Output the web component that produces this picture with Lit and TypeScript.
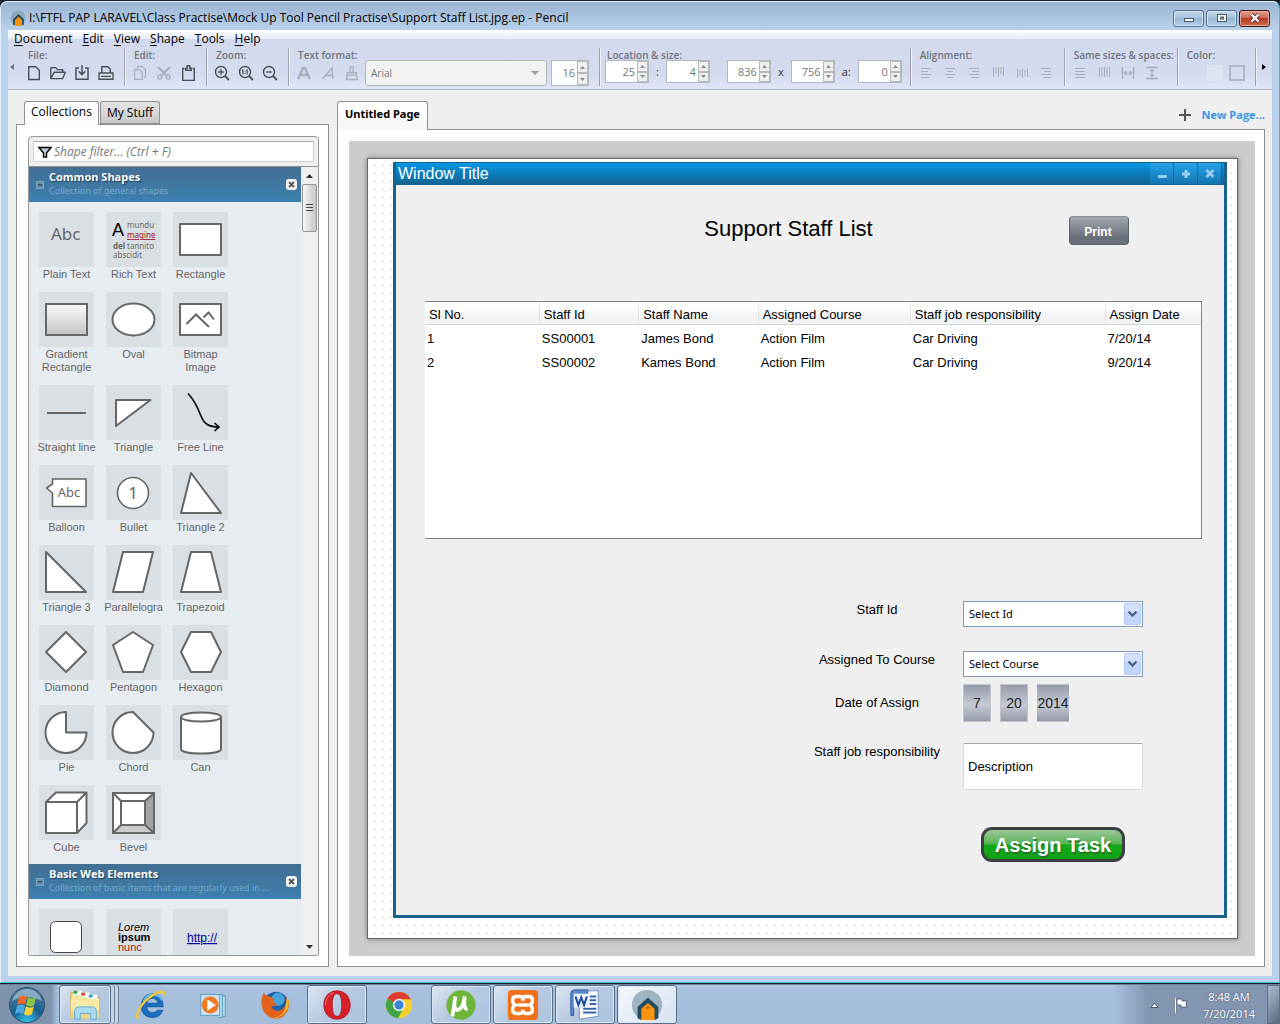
import { LitElement, html, svg, css, nothing } from "lit";
import type { TemplateResult } from "lit";
import { customElement, state } from "lit/decorators.js";
import { classMap } from "lit/directives/class-map.js";

type Art = ReturnType<typeof svg>;

const uiFont = css`"Open Sans", "Noto Sans", sans-serif`;
const noto = css`"Noto Sans", "Open Sans", sans-serif`;
const arial = css`"Liberation Sans", Arial, sans-serif`;

/* ---------- toolbar icons, 16 x 16 ---------- */

const icon = (art: Art) => html`<svg class="icon" viewBox="0 0 16 16" width="16" height="16" aria-hidden="true">${art}</svg>`;

const alignLines = (widths: number[], anchor: "start" | "middle" | "end") =>
  svg`${widths.map((w, i) => {
    const x = anchor === "start" ? 3 : anchor === "middle" ? 8 - w / 2 : 13 - w;
    return svg`<rect x=${x} y=${3 + i * 3} width=${w} height="1"/>`;
  })}`;

const lens = svg`<circle cx="7" cy="7" r="5.5" fill="none" stroke="currentColor" stroke-width="1.4"/><path d="M11 11l4 4" stroke="currentColor" stroke-width="1.8"/>`;

const fileIcons = [
  { name: "New document", art: svg`<path d="M2.7 1.7h7l3.6 3.6v9.2H2.7z" fill="none" stroke="currentColor" stroke-width="1.4"/>` },
  { name: "Open", art: svg`<path d="M.8 13.5V2.6h5l1.5 2h5.5v2.6M.9 13.6l3.2-6.3h11.2l-2.6 6.3z" fill="none" stroke="currentColor" stroke-width="1.4" stroke-linejoin="round"/>` },
  { name: "Save", art: svg`<path d="M5 3H2v11.3h12V3h-3M8 0v9M4.8 6.4L8 9.6l3.2-3.2" fill="none" stroke="currentColor" stroke-width="1.5"/>` },
  { name: "Print", art: svg`<path d="M3.8 8V1.7h6l2.5 2.5V8M1 14.3V8h14v6.3zM3 11.4h10" fill="none" stroke="currentColor" stroke-width="1.4"/>` },
];

const editIcons = [
  { name: "Copy", off: true, art: svg`<path d="M5.7 3.6V1.6h4.8l3 3v7.6h-2M2.7 4.6h4.5l3 3v6.8H2.7z" fill="none" stroke="currentColor" stroke-width="1.2"/>` },
  { name: "Cut", off: true, art: svg`<path d="M2 2l9.3 9M14 2L4.7 11" stroke="currentColor" stroke-width="2.2"/><circle cx="3.8" cy="12" r="2.1" fill="none" stroke="currentColor" stroke-width="1.4"/><circle cx="12.2" cy="12" r="2.1" fill="none" stroke="currentColor" stroke-width="1.4"/>` },
  { name: "Paste", art: svg`<path d="M4.5 3.5H2.7v12h11.6v-12h-1.800" fill="none" stroke="currentColor" stroke-width="1.4"/><path d="M5.7 5.3V3.2h1.5V.8h2.6v2.4h1.5v2.1z" fill="none" stroke="currentColor" stroke-width="1.4"/>` },
];

const zoomIcons = [
  { name: "Zoom in", art: svg`${lens}<path d="M4.2 7h5.6M7 4.2v5.6" stroke="currentColor" stroke-width="1.4"/>` },
  { name: "Actual size", art: svg`${lens}<path d="M4.9 4.6v5M9.2 4.6v5M3.9 5.4h1M8.2 5.4h1" stroke="currentColor" stroke-width="1.2"/><path d="M6.6 5.8h1v1h-1zM6.6 8h1v1h-1z" fill="currentColor"/>` },
  { name: "Zoom out", art: svg`${lens}<path d="M4.2 7h5.6" stroke="currentColor" stroke-width="1.4"/>` },
];

const textIcons = [
  { name: "Bold", off: true, art: svg`<path d="M2.2 14L7 3h2l4.8 11M4.2 10h7.6" fill="none" stroke="currentColor" stroke-width="2.4"/>` },
  { name: "Italic", off: true, art: svg`<path d="M2.5 14L12 3l1 11M6 10.5h6.7" fill="none" stroke="currentColor" stroke-width="1.5"/>` },
  { name: "Copy style", off: true, art: svg`<path d="M6.2 7.5V1.8h3v5.7M3.2 10V7.6h9.2V10M3.2 10.2h9.2l1 4.3H2.2z" fill="none" stroke="currentColor" stroke-width="1.3"/>` },
];

const bars = (heights: number[]) => svg`${heights.map((h, i) => svg`<rect x=${3 + i * 2.5} y="2" width="1" height=${h}/>`)}`;

const alignIcons = [
  { name: "Align left", off: true, art: alignLines([10, 7, 10, 8], "start") },
  { name: "Align center", off: true, art: alignLines([10, 6, 10, 6], "middle") },
  { name: "Align right", off: true, art: alignLines([10, 7, 10, 8], "end") },
  { name: "Align top", off: true, art: bars([10, 7, 10, 7, 9]) },
  { name: "Align middle", off: true, art: svg`${[9, 6, 9, 6, 8].map((h, i) => svg`<rect x=${3 + i * 2.5} y=${8 - h / 2} width="1" height=${h}/>`)}` },
  { name: "Align bottom", off: true, art: alignLines([10, 7, 10, 8], "end") },
];

const sizeIcons = [
  { name: "Same width", off: true, art: alignLines([10, 10, 10, 10], "start") },
  { name: "Same height", off: true, art: bars([10, 10, 10, 10, 10]) },
  { name: "Equal horizontal space", off: true, art: svg`<path d="M2.5 2v12M13.5 2v12" stroke="currentColor" stroke-width="1.4"/><path d="M4.5 8h7M6.5 6l-2 2 2 2M9.5 6l2 2-2 2" fill="none" stroke="currentColor" stroke-width="1.2"/>` },
  { name: "Equal vertical space", off: true, art: svg`<path d="M2 2.5h12M2 13.5h12" stroke="currentColor" stroke-width="1.4"/><path d="M8 4.5v7M6 6.5l2-2 2 2M6 9.5l2 2 2-2" fill="none" stroke="currentColor" stroke-width="1.2"/>` },
];

/* ---------- shape thumbnails, 55 x 55 ---------- */

const poly = (points: string) => svg`<polygon class="ink" points=${points}/>`;

const commonShapes: { label: string; art: Art }[] = [
  { label: "Plain Text", art: svg`<text x="12" y="28" font-size="17" fill="#666">Abc</text>` },
  {
    label: "Rich Text",
    art: svg`<g font-size="8" fill="#6b6b64"><text x="6" y="24" font-size="18" font-family="Liberation Sans, sans-serif" fill="#000">A</text><text x="21" y="16">mundu</text><text x="21" y="26" fill="#a01020" text-decoration="underline">magine</text><text x="7" y="37" font-weight="700">del</text><text x="21" y="37">tannito</text><text x="7" y="46">abscidit</text></g>`,
  },
  { label: "Rectangle", art: svg`<rect class="ink" x="7" y="12" width="41" height="31"/>` },
  {
    label: "Gradient Rectangle",
    art: svg`<defs><linearGradient id="fade" x1="0" y1="0" x2="0" y2="1"><stop offset="0" stop-color="#fafafa"/><stop offset="1" stop-color="#c4c4c4"/></linearGradient></defs><rect x="7" y="12" width="41" height="31" fill="url(#fade)" stroke="#666" stroke-width="2"/>`,
  },
  { label: "Oval", art: svg`<ellipse class="ink" cx="27.5" cy="27.5" rx="21" ry="16"/>` },
  { label: "Bitmap Image", art: svg`<rect class="ink" x="7" y="12" width="41" height="31"/><path class="line" d="M13.5 32L23 22.5 36 35M30.5 25.5L35.5 20.5 41 27.5"/>` },
  { label: "Straight line", art: svg`<path class="line" d="M8 28h39"/>` },
  { label: "Triangle", art: poly("10,15 44.5,15 10,41") },
  { label: "Free Line", art: svg`<path d="M15 8.5C23 17 25 24 28 31 31 39 36 42 46 42M41.5 38L46 42 41.5 46" fill="none" stroke="#000" stroke-width="1.6"/>` },
  { label: "Balloon", art: svg`<path class="ink thin" d="M13.5 14H47V41.5H13.5V28L7.5 23l6-4z"/><text x="30" y="32" font-size="13" fill="#666" text-anchor="middle">Abc</text>` },
  { label: "Bullet", art: svg`<circle class="ink thin" cx="27" cy="28" r="15.5"/><text x="27" y="34" font-size="17" fill="#666" text-anchor="middle">1</text>` },
  { label: "Triangle 2", art: poly("18,8 48,48 8,48") },
  { label: "Triangle 3", art: poly("7,7 47,47 7,47") },
  { label: "Parallelogra", art: poly("17,7 47,7 37,47 7,47") },
  { label: "Trapezoid", art: poly("18,7 38,7 48,47 8,47") },
  { label: "Diamond", art: poly("27,7 47,27 27,47 7,27") },
  { label: "Pentagon", art: poly("27,7 47,20 37,47 17,47 7,20") },
  { label: "Hexagon", art: poly("18,7 38,7 48,27 38,47 18,47 8,27") },
  { label: "Pie", art: svg`<path class="ink" d="M27 27.5V7A20.5 20.5 0 1 0 47.5 27.5z"/>` },
  { label: "Chord", art: svg`<path class="ink" d="M27 7A20.5 20.5 0 1 0 47.5 27.5z"/>` },
  { label: "Can", art: svg`<path class="ink" d="M8 12V44C8 50 48 50 48 44V12"/><ellipse class="ink" cx="28" cy="12" rx="20" ry="4.5"/>` },
  { label: "Cube", art: svg`<path class="ink" d="M7 17L17 7.5H47.5V38L38 48H7zM7 17H38V48M38 17L47.5 7.5"/>` },
  {
    label: "Bevel",
    art: svg`<rect class="ink" x="7" y="8" width="41" height="40"/><path d="M48 8V48L39 40V16z" fill="#a3a3a3"/><path d="M7 48H48L39 40H15z" fill="#ccc"/><path class="line" d="M7 8H48V48H7zM15 16H39V40H15zM7 8l8 8M48 8l-9 8M48 48l-9-8M7 48l8-8"/>`,
  },
];

const webShapes: { name: string; art: Art }[] = [
  { name: "Panel", art: svg`<rect x="11.5" y="12.5" width="31" height="31" rx="5" fill="#fff" stroke="#444" stroke-width="1"/>` },
  { name: "Rich text", art: svg`<g font-size="11" font-family="Liberation Sans, sans-serif"><text x="12" y="22" font-style="italic">Lorem</text><text x="12" y="32" font-weight="700">ipsum</text><text x="12" y="42" fill="#b01818">nunc</text></g>` },
  { name: "Link", art: svg`<text x="14" y="33" font-size="12" font-family="Liberation Sans, sans-serif" fill="#0000a0" text-decoration="underline">http://</text>` },
];

@customElement("shape-section")
class ShapeSection extends LitElement {
  static properties = { heading: {}, note: {}, shapes: { attribute: false } };
  declare heading: string;
  declare note: string;
  declare shapes: { label?: string; name?: string; art: Art }[];

  static styles = css`
    :host { display: block; }
    button { font: inherit; border: 0; padding: 0; background: none; color: inherit; }
    .bar {
      display: flex; align-items: center; gap: 5px; height: 35px; padding: 0 4px 0 7px;
      background: linear-gradient(#436f94, #3d80af);
    }
    .fold, .close { flex: none; display: flex; }
    .titles { flex: 1; min-width: 0; padding-bottom: 3px; }
    h2 {
      margin: 0; font: 700 11px/15px ${uiFont}; color: #fff;
      text-shadow: 1px 1px 1px #1d3e57;
    }
    .note {
      margin: 0; font: 9px/13px ${noto}; color: #75a8cb;
      white-space: nowrap; overflow: hidden; text-overflow: ellipsis;
    }
    .grid {
      display: grid; grid-template-columns: repeat(auto-fill, 55px); gap: 11px 12px;
      padding: 10px 63px 10px 10px;
    }
    .shape { display: flex; flex-direction: column; align-items: center; gap: 1px; width: 55px; }
    .thumb { display: block; background: #dadfe4; font-family: ${noto}; }
    .label { margin: 0 -4px; font: 11px/13px ${arial}; color: #666; text-align: center; }
    .ink { fill: #fff; stroke: #666; stroke-width: 2; stroke-linejoin: round; }
    .thin { stroke-width: 1.6; }
    .line { fill: none; stroke: #666; stroke-width: 2; }
  `;

  render() {
    return html`
      <div class="bar">
        <button class="fold" aria-label="Collapse ${this.heading}">
          <svg width="8" height="8"><rect width="8" height="8" fill="#7ba5c2"/><rect x="1" y="1" width="6" height="6" fill="#6590b0"/><rect x="2" y="3" width="4" height="1.5" fill="#284e6d"/></svg>
        </button>
        <div class="titles">
          <h2>${this.heading}</h2>
          <p class="note">${this.note}</p>
        </div>
        <button class="close" aria-label="Close ${this.heading}">
          <svg width="11" height="11"><rect width="11" height="11" rx="3" fill="#f4f4f4"/><path d="M3 3l5 5M8 3L3 8" stroke="#555" stroke-width="1.8"/></svg>
        </button>
      </div>
      <div class="grid">
        ${this.shapes.map(
          (s) => html`<button class="shape" aria-label=${s.label ?? s.name ?? ""}>
            <svg class="thumb" width="55" height="55" viewBox="0 0 55 55">${s.art}</svg>
            ${s.label ? html`<span class="label">${s.label}</span>` : nothing}
          </button>`,
        )}
      </div>
    `;
  }
}

@customElement("mock-window")
class MockWindow extends LitElement {
  static styles = css`
    :host {
      flex: 1; display: flex; flex-direction: column; min-width: 0; background: #efefef;
      border: 3px solid #17618b; border-top-width: 1px; font: 13px/17px ${arial}; color: #000;
    }
    button, input, select, textarea { font: inherit; color: inherit; margin: 0; box-sizing: border-box; }
    .titlebar {
      display: flex; align-items: flex-start; height: 22px; padding-right: 2px; color: #fff;
      background: linear-gradient(#0597e6, #14618e);
    }
    .name { flex: 1; margin: 0; padding-left: 2px; font: 16px/22px ${arial}; }
    .ctl {
      width: 24px; height: 21px; padding: 0; display: grid; place-items: center; border: 0;
      border-right: 1px solid #15608c; background: linear-gradient(#27a2ea, #1275b0);
    }
    .body { padding: 31px 22px 0 29px; }
    .head { display: flex; align-items: flex-start; padding: 0 73px 0 83px; height: 29px; }
    h1 { flex: 1; margin: 0; font: 22px/25px ${arial}; text-align: center; }
    .print {
      width: 60px; height: 29px; padding: 2px 2px 0 0; border: 1px solid #5d636c; border-top-color: #8b9098; border-radius: 4px;
      background: linear-gradient(#a3a8af, #686f79 75%); color: #fff; font: 700 12px/16px ${arial};
    }
    .list {
      margin-top: 56px; height: 236px; background: #fff;
      border: 1px solid #808488; border-left: 0;
    }
    table { width: 100%; table-layout: fixed; border-collapse: separate; border-spacing: 0; }
    th, td { box-sizing: border-box; height: 24px; padding: 2px 0 0 2px; text-align: left; font-weight: 400; white-space: nowrap; }
    th {
      height: 23px; padding-left: 4px; border-bottom: 1px solid #d5d5d5; border-right: 1px solid #e2e3e6;
      background: linear-gradient(#fff 40%, #f5f6f8 42%, #f1f2f4);
    }
    th:last-child { border-right: 0; }
    .c1 { width: 14.8%; } .c2 { width: 12.8%; } .c3 { width: 15.4%; }
    .c4 { width: 19.6%; } .c5 { width: 25.1%; }
    form {
      display: grid; grid-template-columns: 130px 180px; grid-template-rows: 50px 33px 59px 84px;
      column-gap: 21px; justify-content: end; align-items: start; margin: 62px 59px 0 0;
    }
    label { text-align: center; }
    .tall { line-height: 38px; }
    .pick { display: grid; align-items: center; height: 26px; background: #fff; border: 1px solid #7f9db9; box-sizing: border-box; }
    .pick > * { grid-area: 1 / 1; }
    select {
      appearance: none; width: 100%; height: 24px; border: 0; padding: 0 0 0 5px; background: transparent;
      font: 11px/16px ${noto};
    }
    .drop { justify-self: end; margin-right: 1px; pointer-events: none; }
    .date { display: flex; gap: 9px; }
    .date input {
      width: 28px; height: 38px; padding: 0; border: 1px solid #c3c5cc; text-align: center; font-size: 14px; color: #222;
      background: linear-gradient(#989ca9, #c5c9d4 55%, #989ca9);
    }
    .date .year { width: 32px; border-width: 1px 0; }
    textarea {
      width: 180px; height: 47px; padding: 14px 4px 0; resize: none; overflow: hidden; display: block;
      background: #fff; border: 1px solid #d8d8dc; border-top-color: #a5a6aa; border-radius: 2px;
    }
    .assign {
      grid-column: 2; justify-self: center; width: 144px; height: 35px; padding: 0; white-space: nowrap;
      border: 3px solid #3c4043; border-radius: 11px; color: #fff; font: 700 20px/28px ${arial};
      text-shadow: 1px 2px 1px #26702a;
      background: linear-gradient(#9cc79a, #57b355 48%, #12a81a 52%, #0fa416);
    }
  `;

  private rows = [
    ["1", "SS00001", "James Bond", "Action Film", "Car Driving", "7/20/14"],
    ["2", "SS00002", "Kames Bond", "Action Film", "Car Driving", "9/20/14"],
  ];
  private columns = ["Sl No.", "Staff Id", "Staff Name", "Assigned Course", "Staff job responsibility", "Assign Date"];

  private dropArrow() {
    return html`<svg class="drop" width="17" height="22" aria-hidden="true">
      <rect x="0.5" y="0.5" width="16" height="21" rx="1" fill="#c3d5fb" stroke="#b4c8f3"/>
      <rect x="1" y="1" width="15" height="8" fill="#d5e1fc"/>
      <path d="M4.5 8.5l4 4 4-4" fill="none" stroke="#4d6185" stroke-width="2.4"/>
    </svg>`;
  }

  render() {
    return html`
      <div class="titlebar">
        <p class="name">Window Title</p>
        <button class="ctl" aria-label="Minimize"><svg width="12" height="12"><rect x="2" y="7" width="9" height="3" rx="1" fill="#9ad1f3"/></svg></button>
        <button class="ctl" aria-label="Maximize"><svg width="12" height="12"><path d="M6 2v8M2 6h8" stroke="#9ad1f3" stroke-width="3"/></svg></button>
        <button class="ctl" aria-label="Close"><svg width="12" height="12"><path d="M2.5 2l7 7M9.5 2l-7 7" stroke="#9ad1f3" stroke-width="2.6"/></svg></button>
      </div>
      <div class="body">
        <div class="head">
          <h1>Support Staff List</h1>
          <button class="print">Print</button>
        </div>
        <div class="list">
          <table>
            <thead><tr>${this.columns.map((c, i) => html`<th class="c${i + 1}" scope="col">${c}</th>`)}</tr></thead>
            <tbody>${this.rows.map((r) => html`<tr>${r.map((v) => html`<td>${v}</td>`)}</tr>`)}</tbody>
          </table>
        </div>
        <form @submit=${(e: Event) => e.preventDefault()}>
          <label for="staff">Staff Id</label>
          <div class="pick"><select id="staff"><option>Select Id</option></select>${this.dropArrow()}</div>
          <label for="course">Assigned To Course</label>
          <div class="pick"><select id="course"><option>Select Course</option></select>${this.dropArrow()}</div>
          <label class="tall" for="month">Date of Assign</label>
          <div class="date">
            <input id="month" aria-label="Month" .value=${"7"}>
            <input aria-label="Day" .value=${"20"}>
            <input class="year" aria-label="Year" .value=${"2014"}>
          </div>
          <label for="duty">Staff job responsibility</label>
          <textarea id="duty" .value=${"Description"}></textarea>
          <button class="assign">Assign Task</button>
        </form>
      </div>
    `;
  }
}

/* ---------- taskbar pictures, 36 x 36 ---------- */

const apps: { name: string; open?: boolean; active?: boolean; stack?: boolean; art: Art }[] = [
  {
    name: "Explorer", open: true, stack: true,
    art: svg`<path d="M3 5h10l2 3h10l2 2h6v22H3z" fill="#f3e39a" stroke="#c9ac52"/><rect x="6" y="3" width="9" height="5" fill="#fff" stroke="#ccc" stroke-width=".5"/><rect x="6" y="3" width="4" height="3" fill="#2cab3a"/><rect x="14" y="5" width="9" height="5" fill="#fff"/><rect x="14" y="5" width="4" height="3" fill="#d43"/><rect x="22" y="7" width="9" height="5" fill="#fff"/><rect x="22" y="7" width="4" height="3" fill="#39c"/><path d="M3 12h30v20H3z" fill="#f7eaa6"/><path d="M3 24h30v8H3z" fill="#eed98a"/><path d="M7 33V25q0-5 5-5h13q5 0 5 5v8h-6v-6H13v6z" fill="#a9dcf2" stroke="#5fa9cf"/>`,
  },
  {
    name: "Internet Explorer",
    art: svg`<path d="M31 20H13.5q1 6 6 6 3.5 0 5-2.5H30.5Q28 31.5 19.5 31.5 7.5 30.5 7.5 18.5 8.5 6.5 19.5 6 31 6.5 31 20zM13.5 16H25q-.5-5-5.5-5t-6 5z" fill="#1c6fbe" stroke="#124f92" stroke-width=".6"/><path d="M10 14q3-7 10-7 7 .5 9.5 6" fill="none" stroke="#5cc0f2" stroke-width="1.8"/><path d="M5 31C0 34 5 19 15 11 24 4 34 1 32 8" fill="none" stroke="#f2c53a" stroke-width="2.5"/>`,
  },
  {
    name: "Media Player",
    art: svg`<path d="M26 8h5v22h-5" fill="#bddcec" stroke="#4c9cc4"/><path d="M23 7h5v24h-5" fill="#bddcec" stroke="#4c9cc4"/><rect x="5" y="7" width="20" height="22" fill="#cfe3ee" stroke="#5aa0c6"/><circle cx="15" cy="18" r="9" fill="#ef7a22"/><path d="M12 12l9 6-9 6z" fill="#fff"/>`,
  },
  {
    name: "Firefox",
    art: svg`<circle cx="19" cy="17" r="13" fill="#1f5fa8"/><circle cx="21" cy="12" r="7" fill="#45a3dd"/><path d="M6 5q-5 10 0 20 6 9 17 7 10-4 10-17-1-4-3-6 1 13-8 15-7 0-8-5 5 1 6-2-5-2-3-5-4-4-6-3-3-1-5-4z" fill="#e2621b"/><path d="M31 9q4 9-2 17-6 6-13 6 12-3 13-12z" fill="#f6b82c"/>`,
  },
  {
    name: "Opera", open: true,
    art: svg`<path fill-rule="evenodd" d="M18 3C9 3 4 10 4 18s5 15 14 15 14-7 14-15S27 3 18 3zM18 6c4 0 5 6 5 12s-1 12-5 12-5-6-5-12 1-12 5-12z" fill="#d9202a" stroke="#a5141c" stroke-width=".8"/><path d="M15 5C9 6 6 12 6 18" fill="none" stroke="#f07a7c"/>`,
  },
  {
    name: "Chrome",
    art: svg`<circle cx="18" cy="18" r="14" fill="#f9cf2e"/><path d="M18 18L6 11A14 14 0 0 0 17 32l6-11z" fill="#3fa548"/><path d="M5.9 11A14 14 0 0 1 30.5 12H18v6z" fill="#dc3c31"/><circle cx="18" cy="18" r="6.5" fill="#fff"/><circle cx="18" cy="18" r="5" fill="#4084d8"/>`,
  },
  {
    name: "uTorrent", open: true,
    art: svg`<circle cx="18" cy="18" r="15.5" fill="#6fb53c"/><path d="M12 9l-3 21M12 9q-3 15 3 14 5-1 7-14-2 14 3 13" fill="none" stroke="#fff" stroke-width="4"/>`,
  },
  {
    name: "XAMPP", open: true,
    art: svg`<rect x="2" y="2" width="32" height="32" rx="4" fill="#f0721c"/><path d="M11 9h4q3 0 3 4.5 0-4.5 3-4.5h3q4 0 4 4t-3 5q3 1 3 5t-4 4h-3q-3 0-3-4 0 4-3 4h-4q-4 0-4-4t3-5q-3-1-3-5t4-4zM13 18h10" fill="none" stroke="#fff" stroke-width="3.5"/>`,
  },
  {
    name: "Word", open: true,
    art: svg`<path d="M12 3h20v27l-20 3z" fill="#fff" stroke="#6d8fc5"/><path d="M22 9h8M22 13h8M22 17h8M16 22h14M16 26h14" stroke="#3565b0" stroke-width="2"/><path d="M3 6q0-4 5-4h13v18H6v9H3z" fill="#5b87cb" stroke="#31589b"/><rect x="6" y="6" width="17" height="15" fill="#eaf1fc"/><path d="M8 9l3 9 3-8 3 8 3-9" fill="none" stroke="#1f4a96" stroke-width="2.2"/>`,
  },
  {
    name: "Pencil", open: true, active: true,
    art: svg`<circle cx="18" cy="18" r="16" fill="#9fb4c0"/><path d="M8 32V20l11-10 11 10v12l-4 2h-14z" fill="#234b63"/><path d="M12 34V22l7-6 7 6v12z" fill="#ff9410"/><path d="M17 21h4" stroke="#7a3d00"/>`,
  },
];

@customElement("task-bar")
class TaskBar extends LitElement {
  static styles = css`
    :host {
      display: flex; align-items: stretch; height: 40px; box-sizing: border-box; border-top: 1px solid #6d7f94;
      background: linear-gradient(#b5cae3, #a6bfdd 8%, #a4bddb);
    }
    button { border: 0; padding: 0; background: none; font: inherit; color: inherit; }
    .start { width: 57px; padding-right: 3px; display: grid; place-items: center; background: linear-gradient(90deg, #8093ad 90%, #a4bddb); }
    .apps { flex: 1; display: flex; gap: 2px; padding-left: 2px; }
    .app { width: 60px; display: grid; place-items: center; border: 1px solid transparent; border-radius: 3px; box-sizing: border-box; }
    .open {
      border-color: #5b7189; box-shadow: inset 0 0 0 1px #d9e5f2;
      background: linear-gradient(135deg, #dbe5f1, #b5c9e1 50%, #adc4df);
    }
    .stack {
      width: 52px; margin-right: 8px;
      box-shadow: inset 0 0 0 1px #d9e5f2, 3px 0 #c3d3e6, 4px 0 #6c8098, 7px 0 #c3d3e6, 8px 0 #6c8098;
    }
    .active { background: linear-gradient(135deg, #f4f7fb, #d7e3f1); }
    .tray {
      display: flex; align-items: center; gap: 14px; padding: 0 12px 0 34px; color: #fff;
      background: linear-gradient(90deg, #a4bddb, #8396b1 32px);
    }
    .clock { font: 11px/17px ${uiFont}; text-align: center; text-shadow: 0 0 2px #3c4a5e; }
    .peek { width: 13px; border: 1px solid #5f7085; background: linear-gradient(135deg, #a9b8cc, #5b6c83); }
  `;

  render() {
    return html`
      <button class="start" aria-label="Start">
        <svg width="38" height="38" viewBox="0 0 38 38">
          <defs><radialGradient id="orb" cx=".5" cy="1" r=".9"><stop offset="0" stop-color="#38c6f2"/><stop offset=".5" stop-color="#17608f"/><stop offset="1" stop-color="#4b7898"/></radialGradient></defs>
          <circle cx="19" cy="19" r="17.5" fill="url(#orb)" stroke="#294f6b"/>
          <path d="M4 15q14-8 30 0Q30 3 19 3T4 15z" fill="#b8cedd" opacity=".6"/>
          <path d="M11 11q4-3 8 0l-2 8q-4-3-8 0z" fill="#ee6a2c"/><path d="M20 11q4 3 8 0l-2 8q-4 3-8 0z" fill="#8dc63f"/>
          <path d="M9 20q4-3 8 0l-2 8q-4-3-8 0z" fill="#4cace6"/><path d="M18 20q4 3 8 0l-2 8q-4 3-8 0z" fill="#fbcf3a"/>
        </svg>
      </button>
      <div class="apps">
        ${apps.map(
          (a) => html`<button class=${classMap({ app: true, open: !!a.open, active: !!a.active, stack: !!a.stack })} aria-label=${a.name}>
            <svg width="34" height="34" viewBox="0 0 36 36">${a.art}</svg>
          </button>`,
        )}
      </div>
      <div class="tray">
        <svg width="9" height="6" aria-hidden="true"><path d="M1 5.5L4.5 1 8 5.5z" fill="#fff" stroke="#4a5b70"/></svg>
        <svg width="16" height="18" aria-hidden="true"><path d="M2.5 2v15" stroke="#445468" stroke-width="3"/><path d="M2.5 2v15" stroke="#fff" stroke-width="1.6"/><path d="M4 3h5v2h5l-1 3 1 3H8V9H4z" fill="#fff" stroke="#445468" stroke-width=".8"/></svg>
        <div class="clock">8:48 AM<br>7/20/2014</div>
      </div>
      <button class="peek" aria-label="Show desktop"></button>
    `;
  }
}

@customElement("app-root")
class AppRoot extends LitElement {
  @state() private tab = 0;

  static styles = css`
    :host {
      display: flex; flex-direction: column; height: 100vh; overflow: hidden;
      background: #16202c; color: #000; font: 12px/16px ${uiFont};
    }
    button, input, select { font: inherit; color: inherit; margin: 0; box-sizing: border-box; }
    button { border: 0; padding: 0; background: none; }
    .frame {
      flex: 1; min-height: 0; display: flex; flex-direction: column; padding: 0 7px 6px;
      margin: 1px 0; border: 1px solid #e3eefa; border-bottom-color: #48b7cf; border-right-color: #48b7cf;
      border-radius: 7px 7px 0 0;
      background: linear-gradient(#9ab4d3, #b9d1ea 28px, #b9d1ea);
    }
    .title { display: flex; align-items: center; gap: 3px; height: 28px; padding: 4px 2px 0 2px; box-sizing: border-box; }
    .caption { flex: 1; min-width: 0; white-space: nowrap; overflow: hidden; }
    .sys { display: flex; gap: 2px; }
    .sys button {
      width: 31px; height: 17px; display: grid; place-items: center; border: 1px solid #55708d; border-radius: 3px;
      background: linear-gradient(#c4d7eb, #a9c3df 45%, #96b4d5 50%, #b7cfe8); box-shadow: inset 0 0 0 1px #d6e4f2;
    }
    .sys .x { border-color: #4c1410; background: linear-gradient(#e2a093, #cf6a56 45%, #b93a22 50%, #cf6a4c); box-shadow: inset 0 0 0 1px #e3aa9e; }
    .chrome {
      background: linear-gradient(#fff, #e6ebf6 9px, #d3d9ec 9px, #d5dbee 45px, #e0e5f6);
      border-bottom: 1px solid #b4b8c6;
    }
    .menu { display: flex; gap: 10px; height: 18px; padding: 1px 6px 0; box-sizing: border-box; }
    .menu a { color: #000; text-decoration: none; }
    .menu u { text-underline-offset: 2px; }
    .tools { display: flex; align-items: flex-start; height: 41px; color: #4c5056; }
    .arrow { flex: none; width: 18px; height: 38px; display: grid; align-items: center; justify-items: start; padding-left: 2px; box-sizing: border-box; }
    .group { flex: none; height: 38px; padding: 0 10px 0 7px; border-right: 1px solid #9fa3b0; box-shadow: 1px 0 #f0f2fa; }
    .group.file { padding-left: 0; }
    .cap { display: block; height: 13px; padding-left: 2px; font: 600 10px/14px ${uiFont}; color: #70747c; white-space: nowrap; }
    .set { display: flex; gap: 8px; align-items: center; height: 24px; }
    .tool { display: flex; width: 16px; height: 16px; }
    .off { color: #a9adba; }
    .icon { fill: currentColor; }
    .font { display: grid; align-items: center; width: 182px; height: 26px; margin-left: -3px; background: #f2f2f2; border: 1px solid #b4b4b8; border-radius: 3px; box-sizing: border-box; }
    .font > * { grid-area: 1 / 1; }
    .font select { appearance: none; width: 100%; height: 24px; border: 0; padding: 0 5px; background: transparent; font-size: 10px; color: #777; opacity: 1; }
    .font svg { justify-self: end; margin-right: 7px; pointer-events: none; }
    .spin { display: flex; width: 44px; height: 23px; background: #fff; border: 1px solid #b5b7be; box-sizing: border-box; }
    .spin input { flex: 1; min-width: 0; border: 0; padding: 0 2px 0 0; text-align: right; font-size: 11px; color: #777; background: none; }
    .steps { flex: none; width: 11px; display: flex; flex-direction: column; }
    .steps button { flex: 1; display: grid; place-items: center; background: #efefef; border: 1px solid #b9b9b9; min-height: 0; }
    .size { width: 38px; height: 26px; margin-left: -4px; }
    .nums { gap: 7px; height: 21px; color: #333; font-size: 11px; }
    .nums .far { margin-left: 10px; }
    .group.place { padding: 0 8px 0 5px; }
    .group.same { padding-right: 3px; }
    .swatches { gap: 6px; padding-left: 22px; }
    .sw { width: 16px; height: 16px; background: #dfe4f1; }
    .sw.ring { background: none; border: 2px solid #b3b7c5; }
    .more { flex: 1; height: 38px; display: grid; place-items: center; }

    .work { flex: 1; min-height: 0; display: flex; gap: 8px; padding: 11px 7px 9px 8px; background: #efefef; }
    .side { flex: none; width: 313px; display: flex; flex-direction: column; }
    .tabs { display: flex; gap: 1px; height: 23px; padding-left: 8px; }
    .tab {
      height: 22px; padding: 0 6px; border: 1px solid #8e9094; border-bottom: 0; border-radius: 3px 3px 0 0;
      background: linear-gradient(#e3e3e3, #c9c9c9); font-size: 12px; line-height: 16px; box-shadow: 0 1px #8e9094;
    }
    .tab.on { height: 24px; padding-bottom: 3px; background: linear-gradient(#fff, #fbfbfb); box-shadow: none; position: relative; }
    .panel { flex: 1; min-height: 0; display: flex; border: 1px solid #8e9094; background: #fff; padding: 11px 9px 10px 11px; }
    .palette { flex: 1; min-width: 0; display: flex; flex-direction: column; border: 1px solid #999; border-radius: 4px 4px 2px 2px; background: #efefef; overflow: hidden; }
    .filter { display: flex; align-items: center; gap: 2px; height: 21px; margin: 4px; padding-left: 4px; background: #fff; border: 1px solid #d0d0d0; border-top-color: #aaa; box-sizing: border-box; }
    .filter input { flex: 1; min-width: 0; border: 0; padding: 0; background: none; outline: 0; font: italic 12px/16px ${uiFont}; }
    .filter input::placeholder { color: #777; opacity: 1; }
    .split { flex: 1; min-height: 0; display: flex; border-top: 1px solid #8e9094; }
    .shapes { flex: 1; min-width: 0; overflow: hidden; background: #e7ecf1; }
    .scroll { flex: none; width: 17px; display: flex; flex-direction: column; align-items: center; background: #f0f0f0; }
    .scroll .end { flex: none; height: 17px; display: grid; place-items: center; }
    .thumb {
      width: 15px; height: 48px; box-sizing: border-box; border: 1px solid #95979b; border-radius: 2px;
      background: linear-gradient(90deg, #f5f5f5, #dcdde0 50%, #c3c5c9); display: grid; place-items: center;
    }
    .track { flex: 1; }

    .main { flex: 1; min-width: 0; display: flex; flex-direction: column; }
    .pages { display: flex; align-items: flex-start; height: 28px; }
    .page-tab {
      height: 29px; padding: 0 7px 4px; border: 1px solid #8e9094; border-bottom: 0; border-radius: 3px 3px 0 0;
      background: linear-gradient(#fff, #f7f7f7); font: 700 11px/16px ${noto}; position: relative;
    }
    .new { display: flex; align-items: center; gap: 10px; height: 28px; margin-left: auto; color: #3c95e4; font: 700 11px/16px ${uiFont}; }
    .canvas-panel { flex: 1; min-height: 0; display: flex; border: 1px solid #8e9094; background: #fff; padding: 11px 9px 10px 11px; }
    .desk { flex: 1; min-width: 0; display: flex; padding: 17px 17px 17px 18px; background: #ccc; }
    .sheet {
      flex: 1; min-width: 0; display: flex; padding: 3px 10px 20px 25px; border: 1px solid #666;
      box-shadow: 0 0 5px #777;
      background: radial-gradient(circle at 4px 4px, #e4e7e8 1px, transparent 1px) 3px 2px / 8px 8px, #fff;
    }
  `;

  private tools(list: { name: string; off?: boolean; art: Art }[]) {
    return list.map(
      (t) => html`<button class=${classMap({ tool: true, off: !!t.off })} aria-label=${t.name}>${icon(t.art)}</button>`,
    );
  }

  private spin(label: string, value: string, extra = ""): TemplateResult {
    return html`<span class="spin ${extra}">
      <input aria-label=${label} inputmode="numeric" .value=${value}>
      <span class="steps">
        <button aria-label="Increase ${label}"><svg width="5" height="3"><path d="M0 3L2.5 0 5 3z" fill="#888"/></svg></button>
        <button aria-label="Decrease ${label}"><svg width="5" height="3"><path d="M0 0h5L2.5 3z" fill="#888"/></svg></button>
      </span>
    </span>`;
  }

  render() {
    const menu = ["Document", "Edit", "View", "Shape", "Tools", "Help"];
    return html`
      <div class="frame">
        <header class="title">
          <svg width="16" height="16" viewBox="0 0 36 36" aria-hidden="true"><circle cx="18" cy="18" r="17" fill="#8fa9ba"/><path d="M7 34V21L19 9l12 12v13z" fill="#234b63"/><path d="M11 36V23l8-8 8 8v13z" fill="#ff9410"/></svg>
          <span class="caption">I:\\FTFL PAP LARAVEL\\Class Practise\\Mock Up Tool Pencil Practise\\Support Staff List.jpg.ep - Pencil</span>
          <div class="sys">
            <button aria-label="Minimize"><svg width="12" height="10"><rect x="1.5" y="5.5" width="9" height="3" fill="#fff" stroke="#47566b"/></svg></button>
            <button aria-label="Restore"><svg width="12" height="10"><rect x="1.5" y="1.5" width="9" height="7" fill="#fff" stroke="#47566b"/><rect x="4.5" y="4" width="3" height="2" fill="#8fa9c6" stroke="#47566b"/></svg></button>
            <button class="x" aria-label="Close"><svg width="12" height="10"><path d="M2.5 1.5l7 7M9.5 1.5l-7 7" stroke="#5a2a2a" stroke-width="4"/><path d="M2.5 1.5l7 7M9.5 1.5l-7 7" stroke="#fff" stroke-width="2.4"/></svg></button>
          </div>
        </header>
        <div class="chrome">
          <nav class="menu">${menu.map((m) => html`<a href="#"><u>${m[0]}</u>${m.slice(1)}</a>`)}</nav>
          <div class="tools">
            <span class="arrow"><svg width="4" height="6"><path d="M4 0v6L0 3z" fill="#70747c"/></svg></span>
            <div class="group file"><span class="cap">File:</span><div class="set">${this.tools(fileIcons)}</div></div>
            <div class="group"><span class="cap">Edit:</span><div class="set">${this.tools(editIcons)}</div></div>
            <div class="group"><span class="cap">Zoom:</span><div class="set">${this.tools(zoomIcons)}</div></div>
            <div class="group">
              <span class="cap">Text format:</span>
              <div class="set">
                ${this.tools(textIcons)}
                <span class="font"><select aria-label="Font"><option>Arial</option></select><svg width="8" height="4"><path d="M0 0h8L4 4z" fill="#999"/></svg></span>
                ${this.spin("Font size", "16", "size")}
              </div>
            </div>
            <div class="group place">
              <span class="cap">Location &amp; size:</span>
              <div class="set nums">
                ${this.spin("Left", "25")}<span>:</span>${this.spin("Top", "4")}
                ${this.spin("Width", "836", "far")}<span>x</span>${this.spin("Height", "756")}
                <span>a:</span>${this.spin("Angle", "0")}
              </div>
            </div>
            <div class="group"><span class="cap">Alignment:</span><div class="set">${this.tools(alignIcons)}</div></div>
            <div class="group same"><span class="cap">Same sizes &amp; spaces:</span><div class="set">${this.tools(sizeIcons)}</div></div>
            <div class="group">
              <span class="cap">Color:</span>
              <div class="set swatches"><button class="sw" aria-label="Fill color"></button><button class="sw ring" aria-label="Line color"></button></div>
            </div>
            <span class="more"><svg width="4" height="6"><path d="M0 0v6l4-3z" fill="#000"/></svg></span>
          </div>
        </div>
        <div class="work">
          <aside class="side">
            <div class="tabs" role="tablist">
              ${["Collections", "My Stuff"].map(
                (t, i) => html`<button role="tab" class=${classMap({ tab: true, on: this.tab === i })} @click=${() => (this.tab = i)}>${t}</button>`,
              )}
            </div>
            <div class="panel">
              <div class="palette">
                <label class="filter">
                  <svg width="14" height="12" aria-hidden="true"><path d="M1 1.5h12L8.5 7v4h-3V7z" fill="#b9cce0" stroke="#000" stroke-width="1.4"/></svg>
                  <input aria-label="Shape filter" placeholder="Shape filter... (Ctrl + F)">
                </label>
                <div class="split">
                  <div class="shapes">
                    <shape-section .heading=${"Common Shapes"} .note=${"Collection of general shapes"} .shapes=${commonShapes}></shape-section>
                    <shape-section .heading=${"Basic Web Elements"} .note=${"Collection of basic items that are regularly used in ..."} .shapes=${webShapes}></shape-section>
                  </div>
                  <div class="scroll">
                    <span class="end"><svg width="7" height="4"><path d="M0 4h7L3.5 0z" fill="#333"/></svg></span>
                    <span class="thumb"><svg width="7" height="8"><path d="M0 .5h7M0 3.5h7M0 6.5h7" stroke="#444"/></svg></span>
                    <span class="track"></span>
                    <span class="end"><svg width="7" height="4"><path d="M0 0h7L3.5 4z" fill="#333"/></svg></span>
                  </div>
                </div>
              </div>
            </div>
          </aside>
          <main class="main">
            <div class="pages">
              <button class="page-tab">Untitled Page</button>
              <button class="new"><svg width="14" height="14" aria-hidden="true"><path d="M7 1v12M1 7h12" stroke="#555" stroke-width="2"/></svg>New Page...</button>
            </div>
            <div class="canvas-panel">
              <div class="desk">
                <div class="sheet"><mock-window></mock-window></div>
              </div>
            </div>
          </main>
        </div>
      </div>
      <task-bar></task-bar>
    `;
  }
}
